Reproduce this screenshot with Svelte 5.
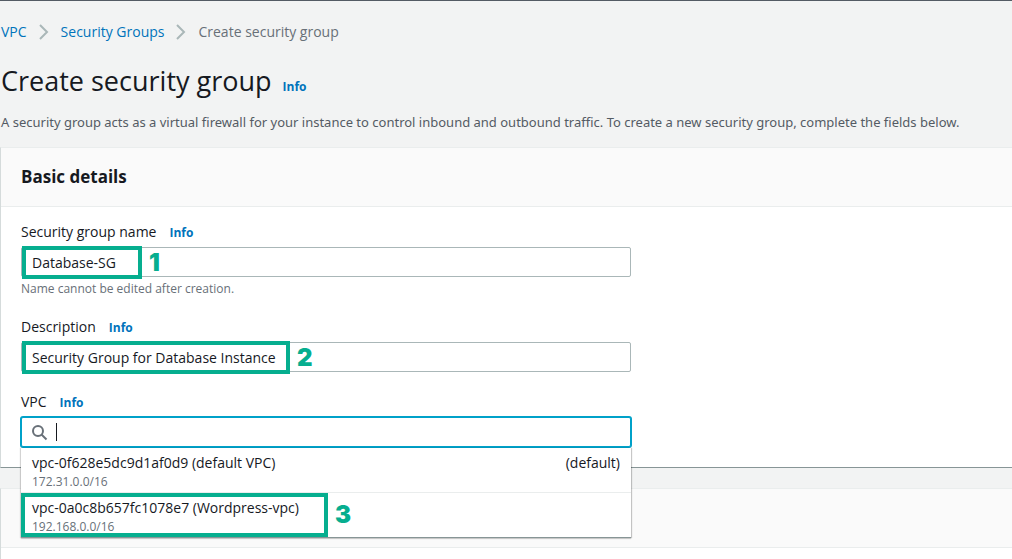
<script>
  let groupName = $state('Database-SG');
  let description = $state('Security Group for Database Instance');
  let query = $state('');
  const vpcs = [
    { label: 'vpc-0f628e5dc9d1af0d9 (default VPC)', cidr: '172.31.0.0/16', tag: '(default)' },
    { label: 'vpc-0a0c8b657fc1078e7 (Wordpress-vpc)', cidr: '192.168.0.0/16', tag: '', step: 3 }
  ];
</script>

{#snippet chevron()}
  <svg width="10" height="16" viewBox="0 0 10 16" aria-hidden="true">
    <path d="M1 1l7 7-7 7" fill="none" stroke="#aab7b8" stroke-width="2" />
  </svg>
{/snippet}

<main>
  <nav aria-label="Breadcrumbs">
    <a href="#vpc">VPC</a>
    {@render chevron()}
    <a href="#groups">Security Groups</a>
    {@render chevron()}
    <span>Create security group</span>
  </nav>

  <div class="title">
    <h1>Create security group</h1>
    <a class="info" href="#info">Info</a>
  </div>
  <p class="intro">
    A security group acts as a virtual firewall for your instance to control inbound and outbound traffic. To create a new security group, complete the fields below.
  </p>

  <section class="card">
    <header><h2>Basic details</h2></header>
    <div class="fields">
      <div class="field">
        <div class="label"><label for="name">Security group name</label><a class="info" href="#name-info">Info</a></div>
        <div class="control">
          <input id="name" type="text" bind:value={groupName} />
          <div class="callout name-callout"><b>1</b></div>
        </div>
        <p class="hint">Name cannot be edited after creation.</p>
      </div>

      <div class="field">
        <div class="label"><label for="description">Description</label><a class="info" href="#description-info">Info</a></div>
        <div class="control">
          <input id="description" type="text" bind:value={description} />
          <div class="callout description-callout"><b>2</b></div>
        </div>
      </div>

      <div class="field">
        <div class="label"><label for="vpc">VPC</label><a class="info" href="#vpc-info">Info</a></div>
        <div class="control">
          <input id="vpc" class="search" type="text" bind:value={query} />
          <svg class="magnifier" width="16" height="16" viewBox="0 0 16 16" aria-hidden="true">
            <circle cx="6" cy="6" r="5" fill="none" stroke="#687078" stroke-width="2" />
            <path d="M9.5 9.5l5 5" stroke="#687078" stroke-width="2" />
          </svg>
          <span class="caret"></span>
          <div class="menu" role="listbox" aria-label="VPC">
            {#each vpcs as vpc}
              <button type="button" class="option" role="option" aria-selected="false">
                <span class="row"><span>{vpc.label}</span><span>{vpc.tag}</span></span>
                <span class="cidr">{vpc.cidr}</span>
                {#if vpc.step}<span class="callout option-callout"><b>{vpc.step}</b></span>{/if}
              </button>
            {/each}
          </div>
        </div>
      </div>
    </div>
  </section>

  <section class="card next">
    <header></header>
  </section>
</main>

<style>
  :global(body) {
    background: #f2f3f3;
  }
  main {
    box-sizing: border-box;
    display: flex;
    flex-direction: column;
    min-height: 100vh;
    border-top: 1px solid #545b64;
    font-family: 'Open Sans', 'Noto Sans', sans-serif;
    font-size: 14px;
    line-height: 22px;
    color: #16191f;
  }
  h1, h2, p {
    margin: 0;
    font-weight: 400;
  }
  a {
    color: #0073bb;
    text-decoration: none;
  }
  nav {
    display: flex;
    align-items: center;
    gap: 12px;
    padding: 20px 1px 0;
    color: #687078;
  }
  .title {
    display: flex;
    align-items: baseline;
    gap: 11px;
    padding: 20px 1px 0;
  }
  h1 {
    font-size: 27px;
    line-height: 36px;
  }
  .info {
    font-size: 12px;
    font-weight: 700;
    line-height: 16px;
  }
  .intro {
    padding: 12px 1px 14px;
    font-family: 'Noto Sans', sans-serif;
    font-size: 13px;
    color: #545b64;
  }
  .card {
    background: #fff;
    border-top: 1px solid #eaeded;
    border-left: 1px solid #d5dbdb;
    border-bottom: 1px solid #879596;
  }
  .next {
    flex: 1;
    margin-top: 20px;
    border-bottom: 0;
  }
  header {
    box-sizing: border-box;
    min-height: 59px;
    padding: 18px 20px;
    background: #fafafa;
    border-bottom: 1px solid #eaeded;
  }
  h2 {
    font-size: 17px;
    font-weight: 700;
  }
  .fields {
    display: flex;
    flex-direction: column;
    gap: 19px;
    max-width: 610px;
    padding: 14px 20px 20px;
  }
  .label {
    display: flex;
    align-items: baseline;
    gap: 13px;
    margin-bottom: 4px;
  }
  .control {
    position: relative;
  }
  input {
    display: block;
    box-sizing: border-box;
    width: 100%;
    height: 30px;
    padding: 0 10px;
    border: 1px solid #aab7b8;
    border-radius: 2px;
    background: #fff;
    font: inherit;
    color: inherit;
    outline: none;
  }
  .search {
    padding-left: 35px;
    border-color: #00a1c9;
    box-shadow: 0 0 0 1px #00a1c9;
  }
  .magnifier {
    position: absolute;
    left: 11px;
    top: 8px;
  }
  .caret {
    position: absolute;
    left: 35px;
    top: 6px;
    width: 1px;
    height: 18px;
    background: #16191f;
  }
  .hint {
    margin-top: 4px;
    font-size: 12px;
    line-height: 16px;
    color: #687078;
  }
  .menu {
    position: absolute;
    z-index: 1;
    top: 31px;
    left: 0;
    right: 0;
    background: #fff;
    border-bottom: 1px solid #879596;
    box-shadow: 0 1px 1px #00000026, 1px 0 1px #00000033, -1px 0 1px #00000026;
  }
  .option {
    position: relative;
    display: block;
    width: 100%;
    padding: 4px 11px 2px;
    border: 0;
    background: none;
    font: inherit;
    color: #16191f;
    text-align: left;
  }
  .option + .option {
    border-top: 1px solid #eaeded;
  }
  .row {
    display: flex;
    justify-content: space-between;
    line-height: 22px;
  }
  .cidr {
    display: block;
    font-size: 12px;
    line-height: 16px;
    color: #687078;
  }
  .callout {
    position: absolute;
    box-sizing: border-box;
    border: 4px solid #06ae8f;
    pointer-events: none;
  }
  .callout b {
    position: absolute;
    left: 100%;
    top: 0;
    bottom: 0;
    display: flex;
    align-items: center;
    margin-left: 11px;
    font-family: Inter, sans-serif;
    font-size: 24px;
    font-weight: 900;
    color: #06ae8f;
  }
  .name-callout,
  .description-callout {
    top: -1px;
    left: 1px;
    height: 33px;
  }
  .name-callout {
    width: 120px;
  }
  .description-callout {
    width: 268px;
  }
  .option-callout {
    top: 0;
    left: 0;
    width: 307px;
    height: 44px;
  }
</style>
